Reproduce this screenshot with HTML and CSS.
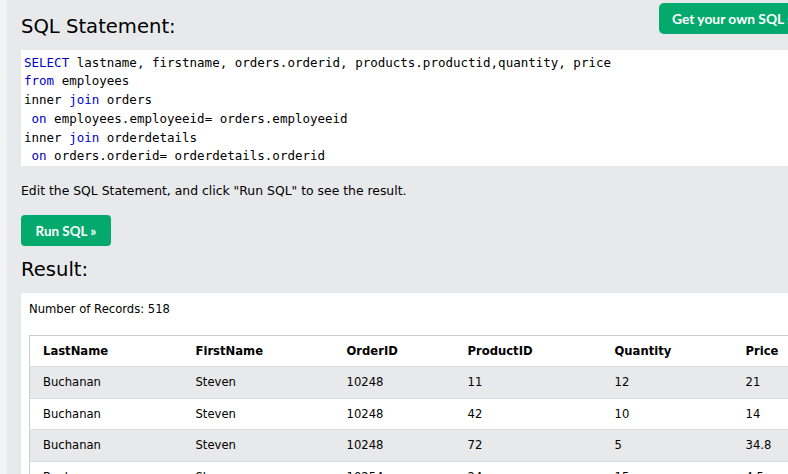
FILE: index.html
```html
<!DOCTYPE html>
<html lang="en">
<head>
<meta charset="utf-8">
<title>SQL Tryit</title>
<link rel="stylesheet" href="styles.css">
</head>
<body>
<div class="panel">
  <a class="own-btn" href="#">Get your own SQL server</a>
  <h2 class="heading">SQL Statement:</h2>
  <div class="code"><span class="kw">SELECT</span> lastname, firstname, orders.orderid, products.productid,quantity, price
<span class="kw">from</span> employees
inner <span class="kw">join</span> orders
 <span class="kw">on</span> employees.employeeid= orders.employeeid
inner <span class="kw">join</span> orderdetails
 <span class="kw">on</span> orders.orderid= orderdetails.orderid</div>
  <p class="hint">Edit the SQL Statement, and click "Run SQL" to see the result.</p>
  <button class="run-btn" type="button">Run SQL »</button>
  <h2 class="heading result-heading">Result:</h2>
  <div class="result">
    <div class="count">Number of Records: 518</div>
    <table class="grid">
      <colgroup>
        <col class="c1"><col class="c2"><col class="c3"><col class="c4"><col class="c5"><col class="c6">
      </colgroup>
      <thead>
        <tr><th>LastName</th><th>FirstName</th><th>OrderID</th><th>ProductID</th><th>Quantity</th><th>Price</th></tr>
      </thead>
      <tbody>
        <tr><td>Buchanan</td><td>Steven</td><td>10248</td><td>11</td><td>12</td><td>21</td></tr>
        <tr><td>Buchanan</td><td>Steven</td><td>10248</td><td>42</td><td>10</td><td>14</td></tr>
        <tr><td>Buchanan</td><td>Steven</td><td>10248</td><td>72</td><td>5</td><td>34.8</td></tr>
        <tr><td>Buchanan</td><td>Steven</td><td>10254</td><td>24</td><td>15</td><td>4.5</td></tr>
        <tr><td>Buchanan</td><td>Steven</td><td>10254</td><td>55</td><td>21</td><td>24</td></tr>
      </tbody>
    </table>
  </div>
</div>
</body>
</html>
```
FILE: styles.css
```css
html, body {
  margin: 0;
  padding: 0;
  overflow: hidden;
  height: 474px;
}
body {
  background: #f4f4f4;
  font-family: "DejaVu Sans", sans-serif;
  color: #000;
}
.panel {
  position: relative;
  margin-left: 7px;
  width: 840px;
  height: 474px;
  background: #e7e9eb;
  padding: 15px 0 0 14px;
  box-sizing: border-box;
}
.own-btn {
  position: absolute;
  left: 652px;
  top: 3px;
  height: 31px;
  line-height: 31px;
  padding: 0 13px;
  background: #04aa6d;
  color: #fff;
  border-radius: 5px;
  font-family: "Lato", sans-serif;
  font-weight: 700;
  font-size: 13.8px;
  text-decoration: none;
  white-space: nowrap;
}
.heading {
  margin: 0;
  font-size: 19.6px;
  font-weight: 400;
  line-height: normal;
}
.code {
  margin-top: 12px;
  background: #fff;
  padding: 3.5px 3px 0;
  font-family: "DejaVu Sans Mono", monospace;
  font-size: 12.5px;
  line-height: 18.75px;
  white-space: pre;
}
.kw {
  color: #0000cd;
}
.hint {
  margin: 17px 0 0;
  font-size: 12.4px;
  line-height: normal;
}
.run-btn {
  display: block;
  margin-top: 17px;
  width: 90px;
  height: 31px;
  border: 0;
  border-radius: 4px;
  background: #04aa6d;
  color: #fff;
  font-family: "Lato", sans-serif;
  font-weight: 700;
  font-size: 13.4px;
  padding: 0;
}
.result-heading {
  margin-top: 12px;
}
.result {
  margin-top: 11.7px;
  background: #fff;
  padding: 9px 0 0 8px;
  height: 200px;
}
.count {
  font-size: 11.6px;
  line-height: normal;
}
.grid {
  margin-top: 19px;
  border-collapse: collapse;
  table-layout: fixed;
  width: 820px;
  border: 1px solid #ccc;
  font-size: 11.6px;
}
.c1 { width: 153px; }
.c2 { width: 151px; }
.c3 { width: 121px; }
.c4 { width: 147px; }
.c5 { width: 131px; }
.c6 { width: 117px; }
.grid th,
.grid td {
  text-align: left;
  padding: 8px 13px;
  line-height: 14.5px;
  border-bottom: 1px solid #ddd;
  white-space: nowrap;
}
.grid th {
  font-weight: 700;
  background: #fff;
}
.grid tbody tr:nth-child(odd) {
  background: #e7e9eb;
}
.grid tbody tr:nth-child(even) {
  background: #fff;
}
```
